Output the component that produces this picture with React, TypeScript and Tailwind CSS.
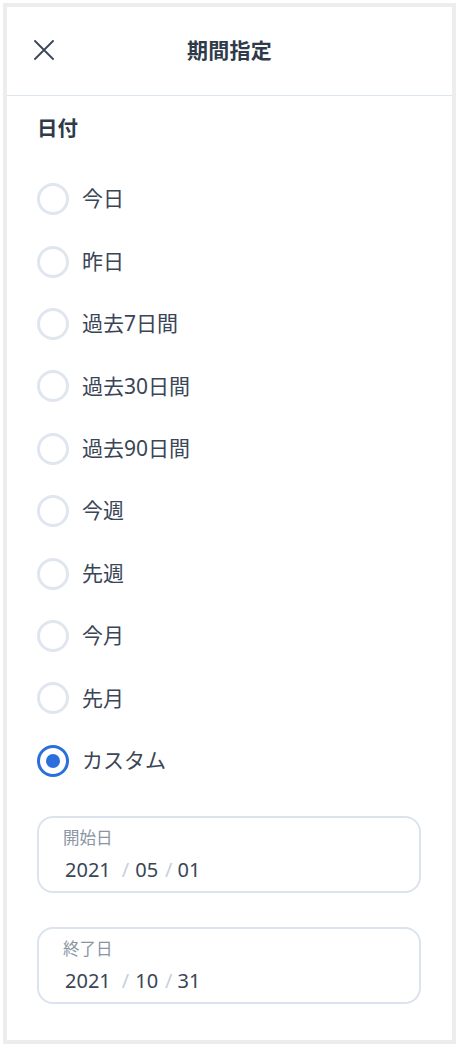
import React, { useState } from 'react';

const OPTIONS = ['今日', '昨日', '過去7日間', '過去30日間', '過去90日間', '今週', '先週', '今月', '先月', 'カスタム'];

const FONT = { fontFamily: '"Noto Sans", "Noto Sans CJK JP", sans-serif' };

const DateBox: React.FC<{ label: string; y: string; m: string; d: string }> = ({ label, y, m, d }) => (
  <div className="rounded-[16px] border-2 border-[#dbe3ee] px-[24px] pt-[9px] pb-[7px]">
    <div className="text-[16.5px] leading-[22px] text-[#8a94a3]">{label}</div>
    <div className="mt-[7px] pl-[2px] flex items-center text-[20px] leading-[28px] text-[#3a4556]">
      <span>{y}</span>
      <span className="ml-[11px] mr-[6px] text-[#c8d0db]">/</span>
      <span>{m}</span>
      <span className="ml-[7px] mr-[5px] text-[#c8d0db]">/</span>
      <span>{d}</span>
    </div>
  </div>
);

export default function App() {
  const [selected, setSelected] = useState('カスタム');

  return (
    <div className="min-h-[1050px] bg-white pt-[3px] pl-[3px]" style={FONT}>
      <div className="w-[453px] h-[1041px] border-[4px] border-[#ededed] bg-white flex flex-col">
        <div className="relative h-[89px] flex items-center justify-center border-b border-[#dde5ef]">
          <button className="absolute left-[27px] top-[33px] text-[#3a4556]">
            <svg width="20" height="20" viewBox="0 0 20 20" fill="none" stroke="currentColor" strokeWidth="1.8" strokeLinecap="round">
              <path d="M1 1l18 18M19 1L1 19" />
            </svg>
          </button>
          <h1 className="text-[21px] font-bold text-[#2f3a4a] tracking-[0.3px]">期間指定</h1>
        </div>

        <div className="px-[30px] pt-[18px]">
          <h2 className="text-[20.5px] leading-[28px] font-bold text-[#2f3a4a]">日付</h2>

          <div className="mt-[26px]">
            {OPTIONS.map((opt) => {
              const on = selected === opt;
              return (
                <label key={opt} className="h-[62.4px] flex items-center gap-[13px] cursor-pointer" onClick={() => setSelected(opt)}>
                  <span
                    className={`w-[32px] h-[32px] rounded-full border-[3px] flex items-center justify-center ${on ? 'border-[#2a6fdb]' : 'border-[#dfe6ef]'}`}
                  >
                    {on && <span className="w-[14px] h-[14px] rounded-full bg-[#2a6fdb]" />}
                  </span>
                  <span className="text-[21px] text-[#3a4556]">{opt}</span>
                </label>
              );
            })}
          </div>

          <div className="mt-[24px] flex flex-col gap-[34px] pr-[1px]">
            <DateBox label="開始日" y="2021" m="05" d="01" />
            <DateBox label="終了日" y="2021" m="10" d="31" />
          </div>
        </div>
      </div>
    </div>
  );
}
